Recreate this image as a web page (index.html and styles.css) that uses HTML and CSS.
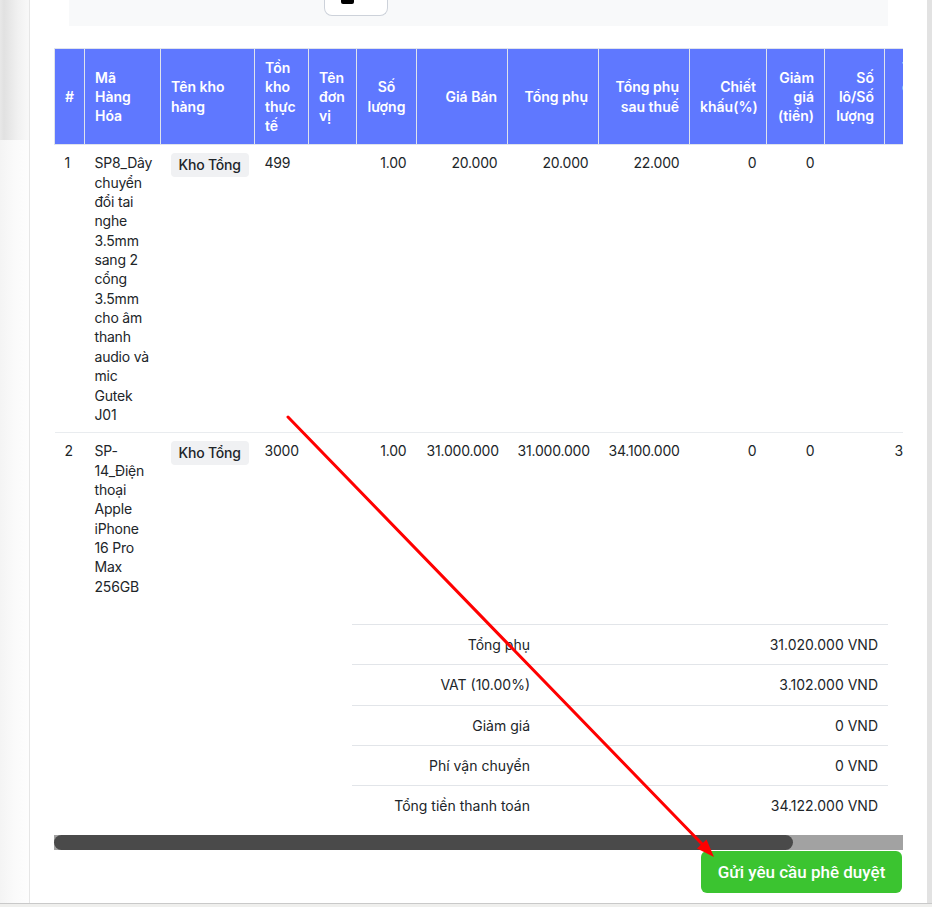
FILE: index.html
```html
<!DOCTYPE html>
<html lang="vi">
<head>
<meta charset="utf-8">
<title>Phiếu yêu cầu</title>
<link rel="stylesheet" href="styles.css">
</head>
<body>
<div class="page">
  <div class="backdrop"></div>
  <main class="card">
    <div class="toolbar">
      <div class="tool-btn"><span class="tool-icon"></span></div>
    </div>

    <div class="table-scroll">
      <table class="items">
        <colgroup>
          <col class="w-idx"><col class="w-code"><col class="w-wh"><col class="w-stock"><col class="w-unit"><col class="w-qty">
          <col class="w-price"><col class="w-price"><col class="w-price"><col class="w-disc"><col class="w-off"><col class="w-lot"><col class="w-extra">
        </colgroup>
        <thead>
          <tr>
            <th>#</th>
            <th>Mã Hàng Hóa</th>
            <th>Tên kho hàng</th>
            <th>Tồn kho thực tế</th>
            <th>Tên đơn vị</th>
            <th class="c">Số lượng</th>
            <th class="r">Giá Bán</th>
            <th class="r">Tổng phụ</th>
            <th class="r">Tổng phụ sau thuế</th>
            <th class="r">Chiết khấu(%)</th>
            <th class="r">Giảm giá (tiền)</th>
            <th class="r">Số lô/Số lượng</th>
            <th class="th-extra">Thời hạn sử dụng còn lại</th>
          </tr>
        </thead>
        <tbody>
          <tr>
            <td>1</td>
            <td>SP8_Dây chuyển đổi tai nghe 3.5mm sang 2 cổng 3.5mm cho âm thanh audio và mic Gutek J01</td>
            <td><span class="badge">Kho Tổng</span></td>
            <td>499</td>
            <td></td>
            <td class="r">1.00</td>
            <td class="r">20.000</td>
            <td class="r">20.000</td>
            <td class="r">22.000</td>
            <td class="r">0</td>
            <td class="r">0</td>
            <td></td>
            <td></td>
          </tr>
          <tr>
            <td>2</td>
            <td>SP-14_Điện thoại Apple iPhone 16 Pro Max 256GB</td>
            <td><span class="badge">Kho Tổng</span></td>
            <td>3000</td>
            <td></td>
            <td class="r">1.00</td>
            <td class="r">31.000.000</td>
            <td class="r">31.000.000</td>
            <td class="r">34.100.000</td>
            <td class="r">0</td>
            <td class="r">0</td>
            <td></td>
            <td>3000</td>
          </tr>
        </tbody>
      </table>
    </div>

    <div class="summary">
      <div class="sum-row"><span>Tổng phụ</span><span>31.020.000 VND</span></div>
      <div class="sum-row"><span>VAT (10.00%)</span><span>3.102.000 VND</span></div>
      <div class="sum-row"><span>Giảm giá</span><span>0 VND</span></div>
      <div class="sum-row"><span>Phí vận chuyển</span><span>0 VND</span></div>
      <div class="sum-row"><span>Tổng tiền thanh toán</span><span>34.122.000 VND</span></div>
    </div>

    <div class="hscroll"><div class="hscroll-thumb"></div></div>

    <div class="actions">
      <button class="btn-submit" type="button">Gửi yêu cầu phê duyệt</button>
    </div>
  </main>
  <div class="rail"></div>
</div>

<svg class="annot" width="932" height="907" viewBox="0 0 932 907" aria-hidden="true">
  <line x1="288" y1="417" x2="702" y2="844" stroke="#ff0000" stroke-width="3" stroke-linecap="round"/>
  <polygon points="714,857 697,848.5 706.5,839.5" fill="#ff0000"/>
</svg>
</body>
</html>
```

FILE: styles.css
```css
* { box-sizing: border-box; }

body {
  margin: 0;
  background: #efefed;
  font-family: Inter, "Noto Sans", sans-serif;
  color: #212529;
  position: relative;
}

.page {
  display: flex;
  height: 904px;
  background: #fff;
  border-bottom: 1px solid #c9c9c9;
  overflow: hidden;
}

.backdrop {
  width: 29px;
  flex: none;
  background:
    linear-gradient(to right, #e8e8e8 0, #e1e1e1 4px, #f1f1f1 18px, #f8f8f8 28px) top / 100% 140px no-repeat,
    linear-gradient(to right, #f4f4f4 0, #fafafa 14px, #fdfdfd 28px);
}

.card {
  flex: 1;
  min-width: 0;
  border-left: 1px solid #e6e6e6;
  padding: 0 24px;
  display: flex;
  flex-direction: column;
}

.rail {
  width: 5px;
  flex: none;
  background: #e2e2e2;
}

/* top toolbar strip */
.toolbar {
  height: 26px;
  margin: 0 15px;
  background: #f8f9fa;
}

.tool-btn {
  width: 64px;
  height: 16px;
  margin-left: 255px;
  background: #fff;
  border: 1px solid #cdd2da;
  border-top: 0;
  border-radius: 0 0 8px 8px;
}

.tool-icon {
  display: block;
  width: 13px;
  height: 4px;
  margin-left: 16px;
  background: #000;
  border-radius: 0 0 2px 2px;
}

/* items table */
.table-scroll {
  margin-top: 22px;
  overflow: hidden;
}

.items {
  width: 975px;
  table-layout: fixed;
  border-collapse: collapse;
  font-size: 14px;
  line-height: 19.35px;
}

.w-idx { width: 30px; }
.w-code { width: 76px; }
.w-wh { width: 94px; }
.w-stock { width: 54px; }
.w-unit { width: 48px; }
.w-qty { width: 60px; }
.w-price { width: 91px; }
.w-disc { width: 77px; }
.w-off { width: 58px; }
.w-lot { width: 60px; }
.w-extra { width: 145px; }

.items th {
  background: #5f78ff;
  color: #fff;
  font-weight: 600;
  text-align: left;
  vertical-align: middle;
  padding: 9px 10px;
  border: 1px solid #dfe3ec;
}

.items td {
  padding: 8px 10px;
  vertical-align: top;
  letter-spacing: -0.2px;
  border-bottom: 1px solid #e9ecef;
}

.items tbody tr:last-child td { border-bottom: 0; }

.items .r { text-align: right; }
.items .c { text-align: center; }
.items .th-extra { padding: 9px 40px 9px 17px; vertical-align: top; }

.badge {
  display: inline-block;
  height: 24px;
  line-height: 24px;
  padding: 0 8px;
  border-radius: 4px;
  background: #f0f1f3;
  font-weight: 450;
  white-space: nowrap;
  vertical-align: top;
}

/* totals */
.summary {
  width: 536px;
  margin: 20px 15px 0 auto;
  font-size: 14px;
  line-height: 19.3px;
}

.sum-row {
  display: grid;
  grid-template-columns: 188px 1fr;
  border-top: 1px solid #e2e5e9;
}

.sum-row span {
  padding: 10px;
  text-align: right;
}

/* horizontal scrollbar of the table */
.hscroll {
  margin-top: 10px;
  height: 15px;
  background: #a2a2a2;
}

.hscroll-thumb {
  width: 739px;
  height: 15px;
  background: #4a4a4a;
  border-radius: 8px;
}

.actions {
  display: flex;
  justify-content: flex-end;
  margin-top: 1px;
  padding-right: 1px;
}

.btn-submit {
  height: 42px;
  width: 201px;
  padding: 0;
  border: 0;
  border-radius: 6px;
  background: #3bc430;
  color: #fff;
  font: 500 17px Roboto, "Liberation Sans", Arial, sans-serif;
}

.annot {
  position: absolute;
  left: 0;
  top: 0;
  pointer-events: none;
}
```
